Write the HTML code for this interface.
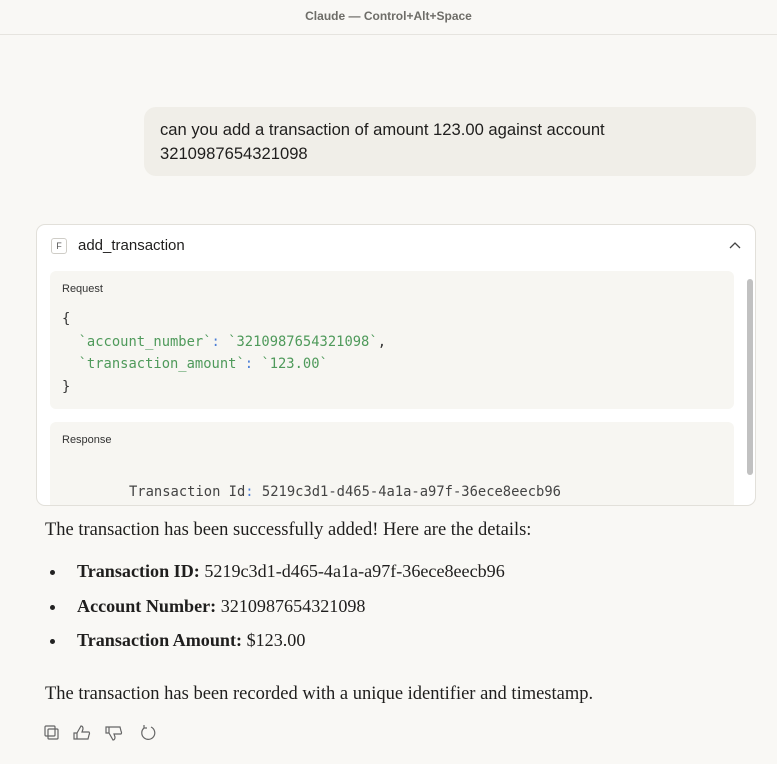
<!DOCTYPE html>
<html><head><style>
body{margin:0;width:777px;height:764px;background:#f9f8f5;font-family:"Liberation Sans",sans-serif;position:relative;overflow:hidden;color:#1f1e1d}
.top{position:absolute;left:0;top:0;width:777px;height:34px;border-bottom:1px solid #e6e4df;background:#f9f8f5;text-align:center;font-size:12px;line-height:32px;color:#6e6d68;font-weight:bold}
.user{position:absolute;left:144px;top:107px;width:612px;height:69px;background:#f0eee8;border-radius:12px;box-sizing:border-box;padding:11px 16px 11px 16px;font-size:16.6px;line-height:24px}
.card{position:absolute;left:36px;top:224px;width:720px;height:282px;background:#fff;border:1px solid #e2e0da;border-radius:9px;box-sizing:border-box;overflow:hidden}
.f{position:absolute;left:14px;top:13px;width:14px;height:14px;border:1px solid #cfcdc7;border-radius:3px;font-size:9px;text-align:center;line-height:14px;color:#555}
.fn{position:absolute;left:41px;top:12px;font-size:15px}
.blk{position:absolute;left:13px;width:684px;background:#f7f6f2;border-radius:6px}
.lbl{position:absolute;left:12px;font-size:11px;color:#333}
.mono{font-family:"DejaVu Sans Mono","Liberation Mono",monospace;font-size:13.8px;position:absolute;white-space:pre}
.g{color:#4f9a5b}.b{color:#4a7dd6}
.sb{position:absolute;left:710px;top:54px;width:6px;height:196px;background:#c1c1c1;border-radius:3px}
.txt{position:absolute;left:45px;font-family:"Liberation Serif",serif;font-size:18.5px}
.dot{position:absolute;left:50px;width:5px;height:5px;border-radius:50%;background:#222}
</style></head><body>
<div class="top">Claude — Control+Alt+Space</div>
<div class="user">can you add a transaction of amount 123.00 against account 3210987654321098</div>
<div class="card">
<div class="f">F</div><div class="fn">add_transaction</div>
<svg style="position:absolute;left:692px;top:16px" width="12" height="8"><path d="M1 7 L6 2 L11 7" fill="none" stroke="#444" stroke-width="1.3"/></svg>
<div class="blk" style="top:46px;height:138px">
<div class="lbl" style="top:12px">Request</div>
<div class="mono" style="left:12px;top:37px;line-height:22.5px;color:#333">{
  <span class="g">`account_number`</span><span class="b">:</span> <span class="g">`3210987654321098`</span>,
  <span class="g">`transaction_amount`</span><span class="b">:</span> <span class="g">`123.00`</span>
}</div>
</div>
<div class="blk" style="top:197px;height:90px">
<div class="lbl" style="top:12px">Response</div>
<div class="mono" style="left:79px;top:62px;color:#444">Transaction Id<span class="b">:</span> 5219c3d1-d465-4a1a-a97f-36ece8eecb96</div>
</div>
<div class="sb"></div>
</div>
<div class="txt" style="top:520px">The transaction has been successfully added! Here are the details:</div>
<div class="dot" style="top:570px"></div><div class="txt" style="left:77px;top:561px;font-size:18.1px"><b>Transaction ID:</b> 5219c3d1-d465-4a1a-a97f-36ece8eecb96</div>
<div class="dot" style="top:605px"></div><div class="txt" style="left:77px;top:596px;font-size:18.1px"><b>Account Number:</b> 3210987654321098</div>
<div class="dot" style="top:639px"></div><div class="txt" style="left:77px;top:630px;font-size:18.1px"><b>Transaction Amount:</b> $123.00</div>
<div class="txt" style="top:684px">The transaction has been recorded with a unique identifier and timestamp.</div>
<svg style="position:absolute;left:44px;top:724px" width="120" height="20" fill="none" stroke="#666" stroke-width="1.2">
<rect x="1" y="2" width="10" height="10" rx="1"/><rect x="4" y="5" width="10" height="10" rx="1"/>
<path d="M33 9 L37 2 Q39 2 39 5 L38 8 L45 8 Q46 9 45 11 L44 15 L33 15 Z M33 9 L30 9 L30 15 L33 15"/>
<path d="M65 9 L69 16 Q71 16 71 13 L70 10 L77 10 Q78 9 77 7 L76 3 L65 3 Z M65 9 L62 9 L62 3 L65 3"/>
<path d="M100 4 A6.5 6.5 0 1 0 107 3 M100 4 L100 1 M100 4 L103 4"/>
</svg>
</body></html>
